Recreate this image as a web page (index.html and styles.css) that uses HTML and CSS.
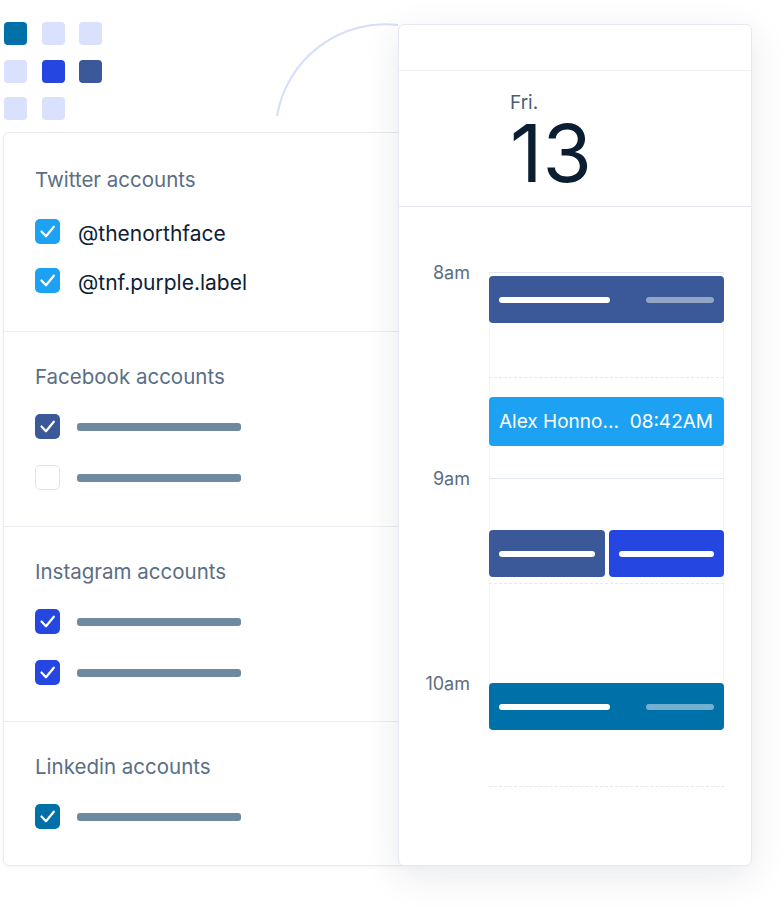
FILE: index.html
```html
<!DOCTYPE html>
<html lang="en">
<head>
    <meta charset="UTF-8">
    <meta name="viewport" content="width=device-width, initial-scale=1.0">
    <title>Accounts calendar</title>
    <link rel="stylesheet" href="styles.css">
</head>
<body>
    <div class="scene">
        <svg class="arc" width="400" height="130" viewBox="0 0 400 130">
            <path d="M277 116 A110 110 0 0 1 398 25" fill="none" stroke="#d5defa" stroke-width="2"/>
        </svg>

        <div class="dots">
            <span class="dot dot-linkedin"></span>
            <span class="dot"></span>
            <span class="dot"></span>
            <span class="dot"></span>
            <span class="dot dot-instagram"></span>
            <span class="dot dot-facebook"></span>
            <span class="dot"></span>
            <span class="dot"></span>
        </div>

        <div class="panel">
            <section class="group group-first">
                <h2>Twitter accounts</h2>
                <ul class="accounts accounts-named">
                    <li>
                        <span class="check check-twitter"><svg viewBox="0 0 25 25"><path d="M6.5 12.5l4.5 4.8 7.8-9.6"/></svg></span>
                        <span class="handle">@thenorthface</span>
                    </li>
                    <li>
                        <span class="check check-twitter"><svg viewBox="0 0 25 25"><path d="M6.5 12.5l4.5 4.8 7.8-9.6"/></svg></span>
                        <span class="handle">@tnf.purple.label</span>
                    </li>
                </ul>
            </section>
            <section class="group">
                <h2>Facebook accounts</h2>
                <ul class="accounts">
                    <li>
                        <span class="check check-facebook"><svg viewBox="0 0 25 25"><path d="M6.5 12.5l4.5 4.8 7.8-9.6"/></svg></span>
                        <span class="bar"></span>
                    </li>
                    <li>
                        <span class="check check-empty"></span>
                        <span class="bar"></span>
                    </li>
                </ul>
            </section>
            <section class="group">
                <h2>Instagram accounts</h2>
                <ul class="accounts">
                    <li>
                        <span class="check check-instagram"><svg viewBox="0 0 25 25"><path d="M6.5 12.5l4.5 4.8 7.8-9.6"/></svg></span>
                        <span class="bar"></span>
                    </li>
                    <li>
                        <span class="check check-instagram"><svg viewBox="0 0 25 25"><path d="M6.5 12.5l4.5 4.8 7.8-9.6"/></svg></span>
                        <span class="bar"></span>
                    </li>
                </ul>
            </section>
            <section class="group">
                <h2>Linkedin accounts</h2>
                <ul class="accounts">
                    <li>
                        <span class="check check-linkedin"><svg viewBox="0 0 25 25"><path d="M6.5 12.5l4.5 4.8 7.8-9.6"/></svg></span>
                        <span class="bar"></span>
                    </li>
                </ul>
            </section>
        </div>

        <div class="calendar">
            <div class="cal-top"></div>
            <div class="cal-day">
                <div class="weekday">Fri.</div>
                <div class="date">13</div>
            </div>
            <div class="cal-body">
                <div class="hour">
                    <div class="hour-label">8am</div>
                    <div class="slot">
                        <div class="half half-first">
                            <div class="event event-facebook event-first">
                                <span class="line"></span>
                                <span class="line line-faded"></span>
                            </div>
                        </div>
                        <div class="half">
                            <div class="event event-twitter event-named">
                                <span class="event-title">Alex Honno...</span>
                                <span class="event-time">08:42AM</span>
                            </div>
                        </div>
                    </div>
                </div>
                <div class="hour">
                    <div class="hour-label">9am</div>
                    <div class="slot">
                        <div class="half half-first">
                            <div class="event-pair">
                                <div class="event event-facebook"><span class="line line-full"></span></div>
                                <div class="event event-instagram"><span class="line line-full"></span></div>
                            </div>
                        </div>
                        <div class="half half-short"></div>
                    </div>
                </div>
                <div class="hour">
                    <div class="hour-label">10am</div>
                    <div class="slot slot-open">
                        <div class="half half-first half-last">
                            <div class="event event-linkedin event-top">
                                <span class="line"></span>
                                <span class="line line-faded"></span>
                            </div>
                        </div>
                        <div class="half"></div>
                    </div>
                </div>
            </div>
        </div>
    </div>
</body>
</html>
```

FILE: styles.css
```css
body {
    margin: 0;
    background: #fff;
    font-family: Inter, "Noto Sans", sans-serif;
    color: #0d2137;
}

.scene {
    position: relative;
    width: 784px;
    height: 908px;
    overflow: hidden;
}

.arc {
    position: absolute;
    top: 0;
    left: 0;
}

/* little squares in the corner */
.dots {
    display: grid;
    grid-template-columns: repeat(3, 23px);
    grid-auto-rows: 23px;
    gap: 14.5px;
    margin: 22px 0 0 4px;
    width: max-content;
}
.dot { background: #d9e1fc; border-radius: 4px; }
.dot-linkedin { background: #0070a8; }
.dot-instagram { background: #2546e0; }
.dot-facebook { background: #3b5998; }

/* accounts panel */
.panel {
    width: 420px;
    margin: 12px 0 0 3px;
    border: 1px solid #e7eaef;
    border-radius: 6px;
    background: #fff;
    box-shadow: 0 2px 4px rgba(30, 40, 60, 0.04);
}
.group {
    padding: 30px 0 36px 31px;
    border-top: 1px solid #e9edf2;
}
.group-first {
    border-top: none;
    padding-top: 32px;
    padding-bottom: 38px;
}
.group h2 {
    margin: 0 0 22px;
    font-size: 20.5px;
    line-height: 30px;
    font-weight: 400;
    color: #5a6e85;
}
.group-first h2 { margin-bottom: 24px; }
.accounts {
    list-style: none;
    margin: 0;
    padding: 0;
    display: flex;
    flex-direction: column;
    gap: 26px;
}
.accounts-named { gap: 24px; }
.accounts li {
    display: flex;
    align-items: center;
    gap: 17px;
    height: 25px;
}
.check {
    width: 25px;
    height: 25px;
    border-radius: 5px;
    box-sizing: border-box;
    flex: none;
}
.check svg { width: 25px; height: 25px; display: block; }
.check path {
    fill: none;
    stroke: #fff;
    stroke-width: 2.2;
    stroke-linecap: round;
    stroke-linejoin: round;
}
.check-twitter { background: #1da1f2; }
.check-facebook { background: #3b5998; }
.check-instagram { background: #2546e0; }
.check-linkedin { background: #0070a8; }
.check-empty { border: 1.5px solid #e0e5eb; background: #fff; }
.handle {
    font-size: 21px;
    line-height: 25px;
    color: #0d2137;
    margin: 4px 0 0 1px;
}
.bar {
    width: 164px;
    height: 8px;
    border-radius: 3px;
    background: #6e8aa1;
}

/* calendar card, laid over the panel */
.calendar {
    position: absolute;
    top: 24px;
    left: 398px;
    width: 354px;
    height: 842px;
    box-sizing: border-box;
    border: 1px solid #e6e9ef;
    border-radius: 6px;
    background: #fff;
    box-shadow: 0 10px 36px rgba(25, 35, 70, 0.10);
    overflow: hidden;
    display: flex;
    flex-direction: column;
}
.cal-top {
    height: 45px;
    border-bottom: 1px solid #f1f2f5;
    flex: none;
}
.cal-day {
    height: 136px;
    box-sizing: border-box;
    padding: 21px 0 0 111px;
    border-bottom: 1px solid #e3e7ed;
    flex: none;
}
.weekday {
    font-size: 19px;
    line-height: 22px;
    color: #4a5d73;
}
.date {
    margin-top: 1px;
    font-size: 80px;
    line-height: 76px;
    color: #0b1d30;
}
.cal-body {
    padding-top: 65px;
    flex: 1;
    overflow: hidden;
}
.hour {
    display: flex;
    gap: 19px;
}
.hour-label {
    width: 71px;
    margin-top: -9px;
    text-align: right;
    font-size: 18px;
    line-height: 20px;
    color: #5c6d81;
    align-self: flex-start;
}
.slot {
    width: 235px;
    border-top: 1px solid #e3e7ee;
    box-shadow: inset 1px 0 #f4f5f8, inset -1px 0 #f4f5f8;
}
.slot-open { box-shadow: none; }
.half {
    display: flow-root;
    height: 100px;
}
.half-short { height: 99px; }
.half-first {
    height: 104px;
    border-bottom: 1px dashed #e3e7ee;
}
.half-last { height: 102px; }

.event {
    height: 47px;
    border-radius: 4px;
    padding: 0 10px;
    display: flex;
    align-items: center;
    justify-content: space-between;
    color: #fff;
}
.event-facebook { background: #3b5998; }
.event-twitter { background: #1da1f2; }
.event-instagram { background: #2546e0; }
.event-linkedin { background: #0070a8; }
.event-first { margin-top: 3px; }
.event-top { margin-top: -1px; }
.event-named {
    margin-top: 19px;
    height: 49px;
    font-size: 19px;
}
.event-time { margin-right: 1px; }
.event-pair {
    display: flex;
    gap: 4px;
    margin-top: 51px;
}
.event-pair .event { flex: 1; }
.line {
    width: 111px;
    height: 6px;
    border-radius: 3px;
    background: #fff;
}
.line-faded {
    width: 68px;
    background: rgba(255, 255, 255, 0.45);
}
.line-full { width: 100%; }
```
